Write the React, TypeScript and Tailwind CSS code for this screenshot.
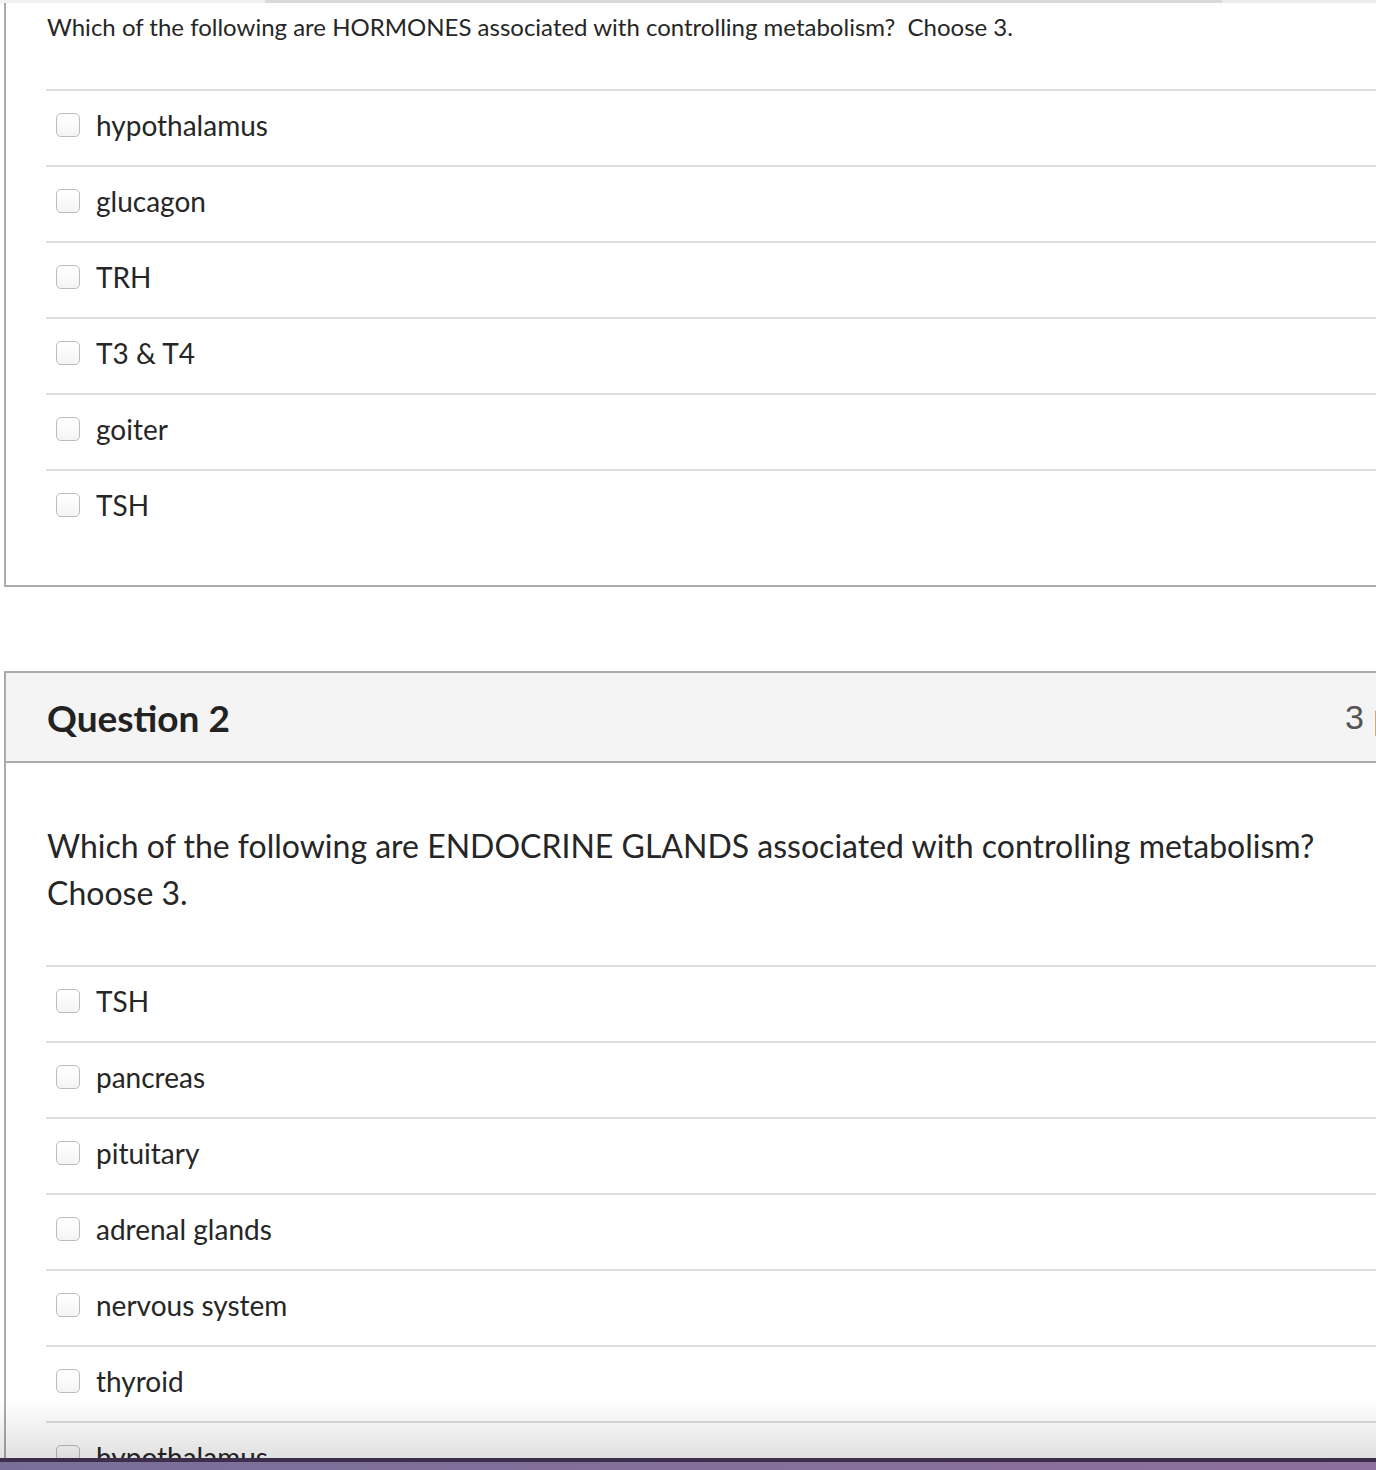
const q1Answers = ["hypothalamus", "glucagon", "TRH", "T3 & T4", "goiter", "TSH"];
const q2Answers = ["TSH", "pancreas", "pituitary", "adrenal glands", "nervous system", "thyroid", "hypothalamus"];

function Answer({ label }: { label: string }) {
  return (
    <div className="flex h-[76px] items-center gap-4 border-t-2 border-[#dedede] pb-[6px] pl-[10px]">
      <span className="block h-6 w-6 shrink-0 rounded-[5px] border border-[#bdbdbd] bg-gradient-to-b from-white to-[#f5f5f5]" />
      <span className="text-[28px] leading-none text-[#262626]">{label}</span>
    </div>
  );
}

export default function App() {
  return (
    <div className="relative h-[1470px] overflow-hidden bg-white font-['Lato','Noto_Sans',sans-serif]">
      <div className="flex h-[3px]">
        <div className="w-[265px] bg-[#f1f1f1]" />
        <div className="w-[957px] bg-[#dadada]" />
        <div className="flex-1 bg-[#ececec]" />
      </div>

      <section className="ml-[4px] w-[1420px] border-b-2 border-l-2 border-[#ababab] pb-[40px]">
        <p className="pl-[41px] pt-[9px] text-[24px] leading-[30px] text-[#262626]">
          Which of the following are HORMONES associated with controlling metabolism?&nbsp; Choose 3.
        </p>
        <div className="ml-[40px] mt-[47px]">
          {q1Answers.map((a) => (
            <Answer key={a} label={a} />
          ))}
        </div>
      </section>

      <section className="ml-[4px] mt-[84px] w-[1420px] border-l-2 border-t-2 border-[#ababab]">
        <header className="flex h-[90px] items-center border-b-2 border-[#ababab] bg-[#f4f4f4] pl-[41px]">
          <h2 className="w-[1298px] text-[37px] font-bold leading-none text-[#222]">Question 2</h2>
          <span className="font-['Liberation_Sans',sans-serif] text-[34px] leading-none text-[#555]">3 pts</span>
        </header>
        <p className="w-[1340px] pl-[41px] pt-[59px] text-[32px] leading-[47px] text-[#262626]">
          Which of the following are ENDOCRINE GLANDS associated with controlling metabolism? Choose 3.
        </p>
        <div className="ml-[40px] mt-[49px]">
          {q2Answers.map((a) => (
            <Answer key={a + "2"} label={a} />
          ))}
        </div>
      </section>

      <div className="pointer-events-none absolute inset-x-0 bottom-0 flex flex-col">
        <div className="h-[58px] bg-gradient-to-b from-white/0 to-[#000]/[0.12]" />
        <div className="h-[4px] bg-[#3d2e4c]" />
        <div className="h-[8px] bg-gradient-to-r from-[#786f98] to-[#8e6f9d]" />
      </div>
    </div>
  );
}
